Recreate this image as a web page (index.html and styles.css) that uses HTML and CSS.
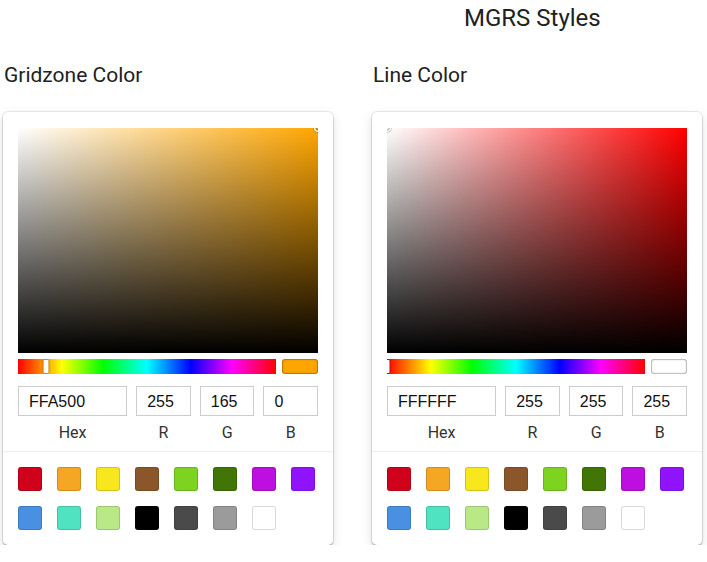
FILE: index.html
```html
<!DOCTYPE html>
<html>
<head>
<meta charset="utf-8">
<link rel="stylesheet" href="styles.css">
</head>
<body>
<div class="page">
  <h1 class="page-title">MGRS Styles</h1>
  <div class="columns">
    <section class="column">
      <h2 class="col-title">Gridzone Color</h2>
      <div class="picker">
        <div class="picker-main">
          <div class="saturation" style="background-color: hsl(39, 100%, 50%)">
            <div class="sat-white"></div>
            <div class="sat-black"></div>
            <div class="sat-pointer" style="left: 100%; top: 0%"></div>
          </div>
          <div class="hue-row">
            <div class="hue">
              <div class="hue-pointer" style="left: 10.8%"></div>
            </div>
            <div class="active-color" style="background: #FFA500"></div>
          </div>
          <div class="fields">
            <div class="field field-hex"><input class="field-input" value="FFA500"></div>
            <div class="field"><input class="field-input" value="255"></div>
            <div class="field"><input class="field-input" value="165"></div>
            <div class="field"><input class="field-input" value="0"></div>
          </div>
          <div class="field-labels">
            <span class="field-label field-hex">Hex</span>
            <span class="field-label">R</span>
            <span class="field-label">G</span>
            <span class="field-label">B</span>
          </div>
        </div>
        <div class="swatches">
          <div class="swatch" style="background:#D0021B"></div>
          <div class="swatch" style="background:#F5A623"></div>
          <div class="swatch" style="background:#F8E71C"></div>
          <div class="swatch" style="background:#8B572A"></div>
          <div class="swatch" style="background:#7ED321"></div>
          <div class="swatch" style="background:#417505"></div>
          <div class="swatch" style="background:#BD10E0"></div>
          <div class="swatch" style="background:#9013FE"></div>
          <div class="swatch" style="background:#4A90E2"></div>
          <div class="swatch" style="background:#50E3C2"></div>
          <div class="swatch" style="background:#B8E986"></div>
          <div class="swatch" style="background:#000000"></div>
          <div class="swatch" style="background:#4A4A4A"></div>
          <div class="swatch" style="background:#9B9B9B"></div>
          <div class="swatch" style="background:#FFFFFF"></div>
        </div>
      </div>
    </section>
    <section class="column">
      <h2 class="col-title">Line Color</h2>
      <div class="picker">
        <div class="picker-main">
          <div class="saturation" style="background-color: hsl(0, 100%, 50%)">
            <div class="sat-white"></div>
            <div class="sat-black"></div>
            <div class="sat-pointer" style="left: 0%; top: 0%"></div>
          </div>
          <div class="hue-row">
            <div class="hue">
              <div class="hue-pointer" style="left: 0%"></div>
            </div>
            <div class="active-color" style="background: #FFFFFF"></div>
          </div>
          <div class="fields">
            <div class="field field-hex"><input class="field-input" value="FFFFFF"></div>
            <div class="field"><input class="field-input" value="255"></div>
            <div class="field"><input class="field-input" value="255"></div>
            <div class="field"><input class="field-input" value="255"></div>
          </div>
          <div class="field-labels">
            <span class="field-label field-hex">Hex</span>
            <span class="field-label">R</span>
            <span class="field-label">G</span>
            <span class="field-label">B</span>
          </div>
        </div>
        <div class="swatches">
          <div class="swatch" style="background:#D0021B"></div>
          <div class="swatch" style="background:#F5A623"></div>
          <div class="swatch" style="background:#F8E71C"></div>
          <div class="swatch" style="background:#8B572A"></div>
          <div class="swatch" style="background:#7ED321"></div>
          <div class="swatch" style="background:#417505"></div>
          <div class="swatch" style="background:#BD10E0"></div>
          <div class="swatch" style="background:#9013FE"></div>
          <div class="swatch" style="background:#4A90E2"></div>
          <div class="swatch" style="background:#50E3C2"></div>
          <div class="swatch" style="background:#B8E986"></div>
          <div class="swatch" style="background:#000000"></div>
          <div class="swatch" style="background:#4A4A4A"></div>
          <div class="swatch" style="background:#9B9B9B"></div>
          <div class="swatch" style="background:#FFFFFF"></div>
        </div>
      </div>
    </section>
  </div>
</div>
</body>
</html>
```

FILE: styles.css
```css
* { box-sizing: border-box; }

html, body {
  margin: 0;
  padding: 0;
  background: #ffffff;
  font-family: Roboto, "Liberation Sans", sans-serif;
  color: #212121;
}

.page {
  width: 707px;
  overflow: hidden;
}

.page-title {
  margin: 0;
  padding-left: 464px;
  font-size: 24px;
  line-height: 36px;
  font-weight: 400;
  color: #212121;
}

.columns {
  display: flex;
  gap: 39px;
  padding-left: 3px;
  margin-top: 25px;
}

.column {
  width: 330px;
  flex: none;
}

.col-title {
  margin: 0 0 23px 1px;
  font-size: 21px;
  line-height: 28px;
  font-weight: 400;
  color: #212121;
}

.picker {
  width: 330px;
  background: #fff;
  border-radius: 5px;
  box-shadow: 0 0 0 1px rgba(0, 0, 0, 0.08),
              0 2px 2px rgba(0, 0, 0, 0.2),
              0 4px 12px rgba(0, 0, 0, 0.12);
}

.picker-main {
  padding: 16px 15px 10px;
}

.saturation {
  position: relative;
  height: 225px;
  overflow: hidden;
}

.sat-white {
  position: absolute;
  inset: 0;
  background: linear-gradient(to right, #fff, rgba(255, 255, 255, 0));
}

.sat-black {
  position: absolute;
  inset: 0;
  background: linear-gradient(to top, #000, rgba(0, 0, 0, 0));
}

.sat-pointer {
  position: absolute;
  width: 5px;
  height: 5px;
  border-radius: 50%;
  transform: translate(-2.5px, -2.5px);
  box-shadow: 0 0 0 1.5px #fff,
              inset 0 0 1px 1px rgba(0, 0, 0, 0.3),
              0 0 1px 2px rgba(0, 0, 0, 0.4);
}

.hue-row {
  display: flex;
  gap: 6px;
  margin-top: 6px;
  height: 15px;
}

.hue {
  position: relative;
  flex: 1;
  overflow: hidden;
  background: linear-gradient(to right, #f00 0%, #ff0 17%, #0f0 33%, #0ff 50%, #00f 67%, #f0f 83%, #f00 100%);
}

.hue-pointer {
  position: absolute;
  top: 1px;
  width: 5px;
  height: 13px;
  border-radius: 1px;
  background: #fff;
  transform: translateX(-2.5px);
  box-shadow: 0 0 2px rgba(0, 0, 0, 0.6);
}

.active-color {
  width: 36px;
  flex: none;
  border-radius: 3px;
  box-shadow: inset 0 0 0 1px rgba(0, 0, 0, 0.18), inset 0 0 3px rgba(0, 0, 0, 0.25);
}

.fields,
.field-labels {
  display: flex;
  gap: 9px;
}

.fields {
  margin-top: 12px;
}

.field {
  flex: 1;
}

.field-hex {
  flex: 2;
}

.field-input {
  display: block;
  width: 100%;
  height: 30px;
  margin: 0;
  padding: 2px 0 0 10px;
  border: 1px solid #cccccc;
  border-radius: 0;
  font-family: "Liberation Sans", Arial, sans-serif;
  font-size: 16px;
  color: #111;
  background: #fff;
  outline: none;
}

.field-labels {
  margin-top: 7px;
}

.field-label {
  flex: 1;
  text-align: center;
  font-size: 16px;
  line-height: 20px;
  color: #333;
}

.field-label.field-hex {
  flex: 2;
}

.field-labels + * { margin: 0; }

.picker-main { padding-bottom: 8px; }

.swatches {
  border-top: 1px solid #eeeeee;
  padding: 15px;
  display: grid;
  grid-template-columns: repeat(8, 24px);
  column-gap: 15px;
  row-gap: 15px;
}

.swatch {
  width: 24px;
  height: 24px;
  border-radius: 3px;
  box-shadow: inset 0 0 0 1px rgba(0, 0, 0, 0.15);
}
```
